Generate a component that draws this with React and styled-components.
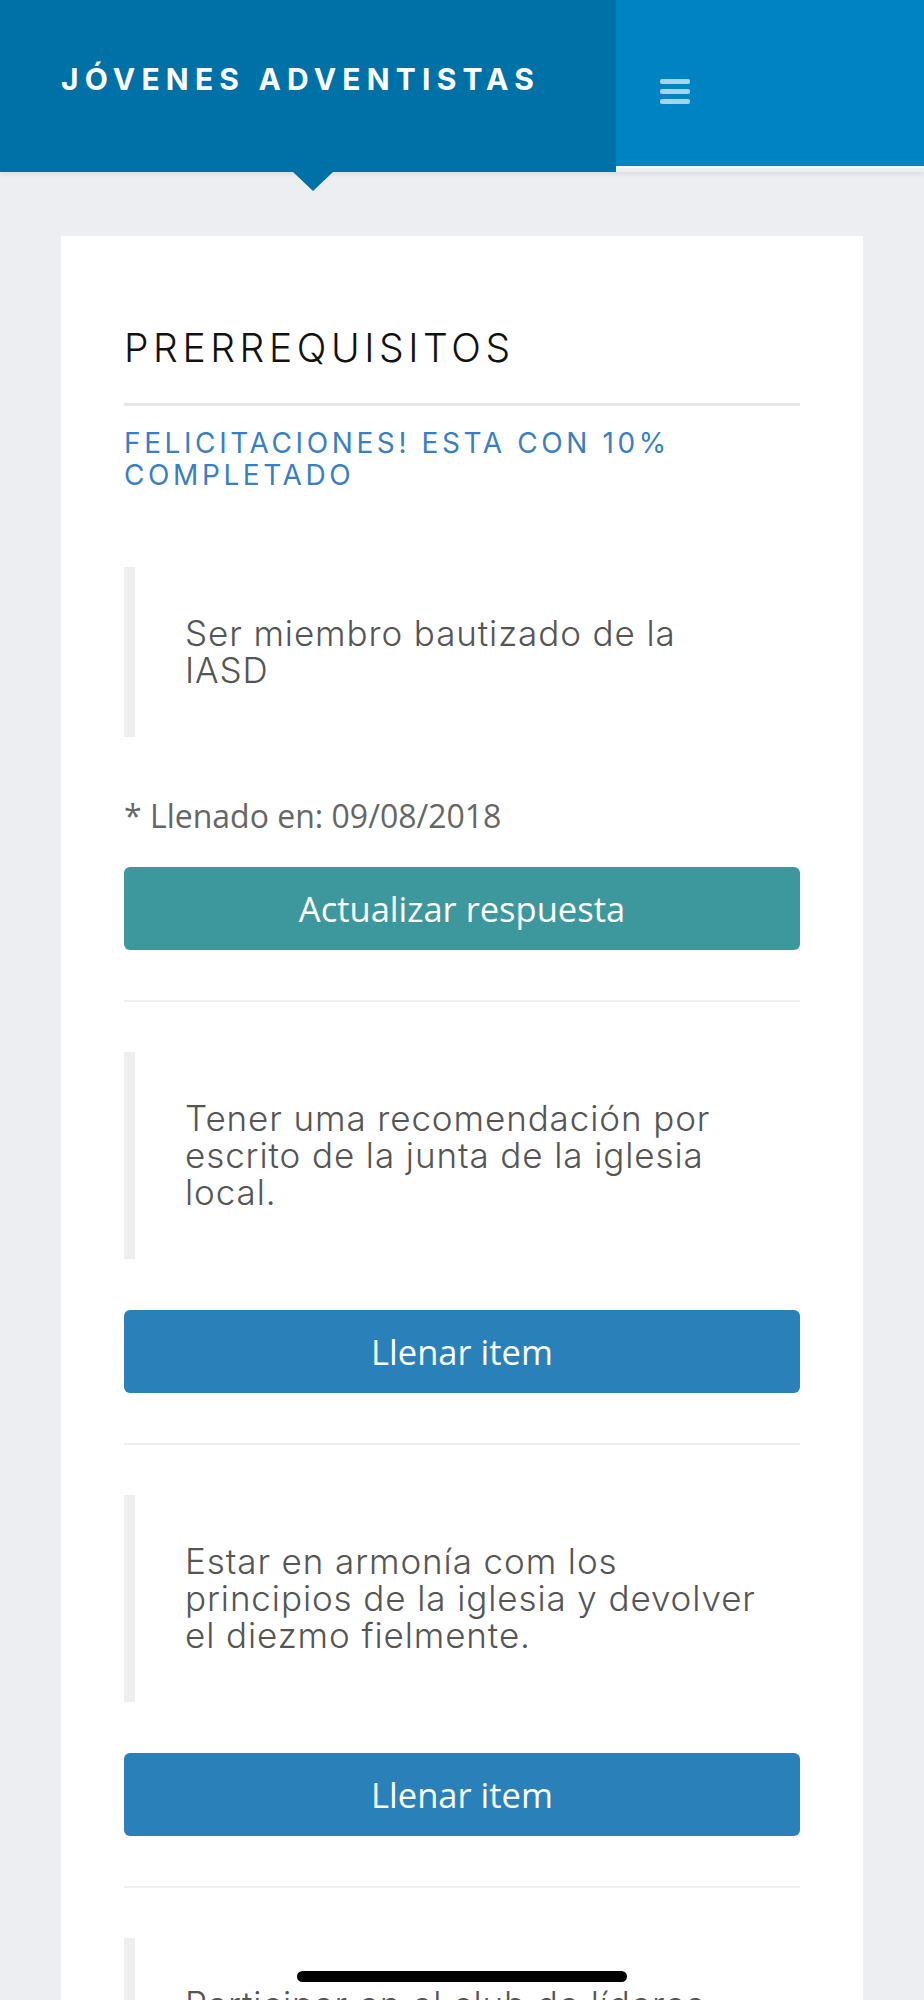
import React from 'react';
import styled, { createGlobalStyle } from 'styled-components';

const GlobalStyle = createGlobalStyle`
  body {
    margin: 0;
    background: #eceef1;
    font-family: "Inter", "Open Sans", sans-serif;
  }
`;

const Header = styled.header`
  display: flex;
  align-items: flex-start;
  height: 172px;
  box-shadow: 0 3px 4px rgba(0, 0, 0, 0.06);
`;

const Brand = styled.div`
  position: relative;
  width: 616px;
  height: 172px;
  box-sizing: border-box;
  padding: 62px 0 0 61px;
  background: #0071a7;
  color: #fff;
  font-family: "Inter", sans-serif;
  font-weight: 700;
  font-size: 30px;
  line-height: 34px;
  letter-spacing: 6.2px;
  white-space: nowrap;

  &::after {
    content: "";
    position: absolute;
    left: 293px;
    bottom: -19px;
    border-left: 20px solid transparent;
    border-right: 20px solid transparent;
    border-top: 19px solid #0071a7;
  }
`;

const NavSide = styled.div`
  flex: 1;
  height: 168px;
  box-sizing: border-box;
  padding: 79px 0 0 44px;
  background: #0083c3;
  border-bottom: 2px solid #f4f6f8;
`;

const Card = styled.main`
  margin: 64px 61px 0;
  padding: 90px 63px 40px;
  background: #fff;
`;

const Title = styled.h1`
  margin: 0;
  padding-bottom: 33px;
  border-bottom: 3px solid #e6e6e6;
  font-family: "Inter", sans-serif;
  font-weight: 300;
  font-size: 39px;
  line-height: 44px;
  letter-spacing: 4.6px;
  color: #111;
`;

const Progress = styled.h2`
  margin: 21px 0 0;
  font-family: "Inter", sans-serif;
  font-weight: 400;
  font-size: 28px;
  line-height: 32px;
  letter-spacing: 3.6px;
  color: #3a7fc0;
`;

const List = styled.div`
  margin-top: 76px;
`;

const Item = styled.section`
  padding-bottom: 50px;
  margin-bottom: 50px;
  border-bottom: 2px solid #efefef;
`;

const Quote = styled.blockquote`
  margin: 0;
  padding: 48px 40px 48px 50px;
  border-left: 11px solid #eeeeee;
  font-family: "Inter", sans-serif;
  font-weight: 300;
  font-size: 35px;
  line-height: 37px;
  letter-spacing: 0.9px;
  color: #555;
`;

const Note = styled.p`
  margin: 60px 0 0;
  font-family: "Open Sans", sans-serif;
  font-size: 32px;
  line-height: 38px;
  color: #666;
`;

const Button = styled.button`
  display: block;
  width: 100%;
  height: 83px;
  margin-top: ${p => (p.$afterNote ? '32px' : '51px')};
  border: none;
  border-radius: 6px;
  background: ${p => (p.$done ? '#3d989e' : '#2a80b9')};
  color: #fff;
  font-family: "Open Sans", sans-serif;
  font-size: 34.5px;
  cursor: pointer;
`;

const HomeBar = styled.div`
  position: fixed;
  left: 297px;
  bottom: 18px;
  width: 330px;
  height: 11px;
  border-radius: 6px;
  background: #000;
`;

const Burger = () => (
  <svg width="30" height="25" viewBox="0 0 30 25">
    <rect x="0" y="0" width="30" height="5" rx="2" fill="#a7d3ef" />
    <rect x="0" y="10" width="30" height="5" rx="2" fill="#a7d3ef" />
    <rect x="0" y="20" width="30" height="5" rx="2" fill="#a7d3ef" />
  </svg>
);

const items = [
  { text: 'Ser miembro bautizado de la IASD', filled: '09/08/2018' },
  { text: 'Tener uma recomendación por escrito de la junta de la iglesia local.' },
  { text: 'Estar en armonía com los principios de la iglesia y devolver el diezmo fielmente.' },
  { text: 'Participar en el club de líderes juveniles de su iglesia local.' },
];

export default function App() {
  return (
    <>
      <GlobalStyle />
      <Header>
        <Brand>JÓVENES ADVENTISTAS</Brand>
        <NavSide>
          <Burger />
        </NavSide>
      </Header>
      <Card>
        <Title>PRERREQUISITOS</Title>
        <Progress>FELICITACIONES! ESTA CON 10% COMPLETADO</Progress>
        <List>
          {items.map((item, i) => (
            <Item key={i}>
              <Quote>{item.text}</Quote>
              {item.filled && <Note>* Llenado en: {item.filled}</Note>}
              <Button $done={!!item.filled} $afterNote={!!item.filled}>
                {item.filled ? 'Actualizar respuesta' : 'Llenar item'}
              </Button>
            </Item>
          ))}
        </List>
      </Card>
      <HomeBar />
    </>
  );
}
